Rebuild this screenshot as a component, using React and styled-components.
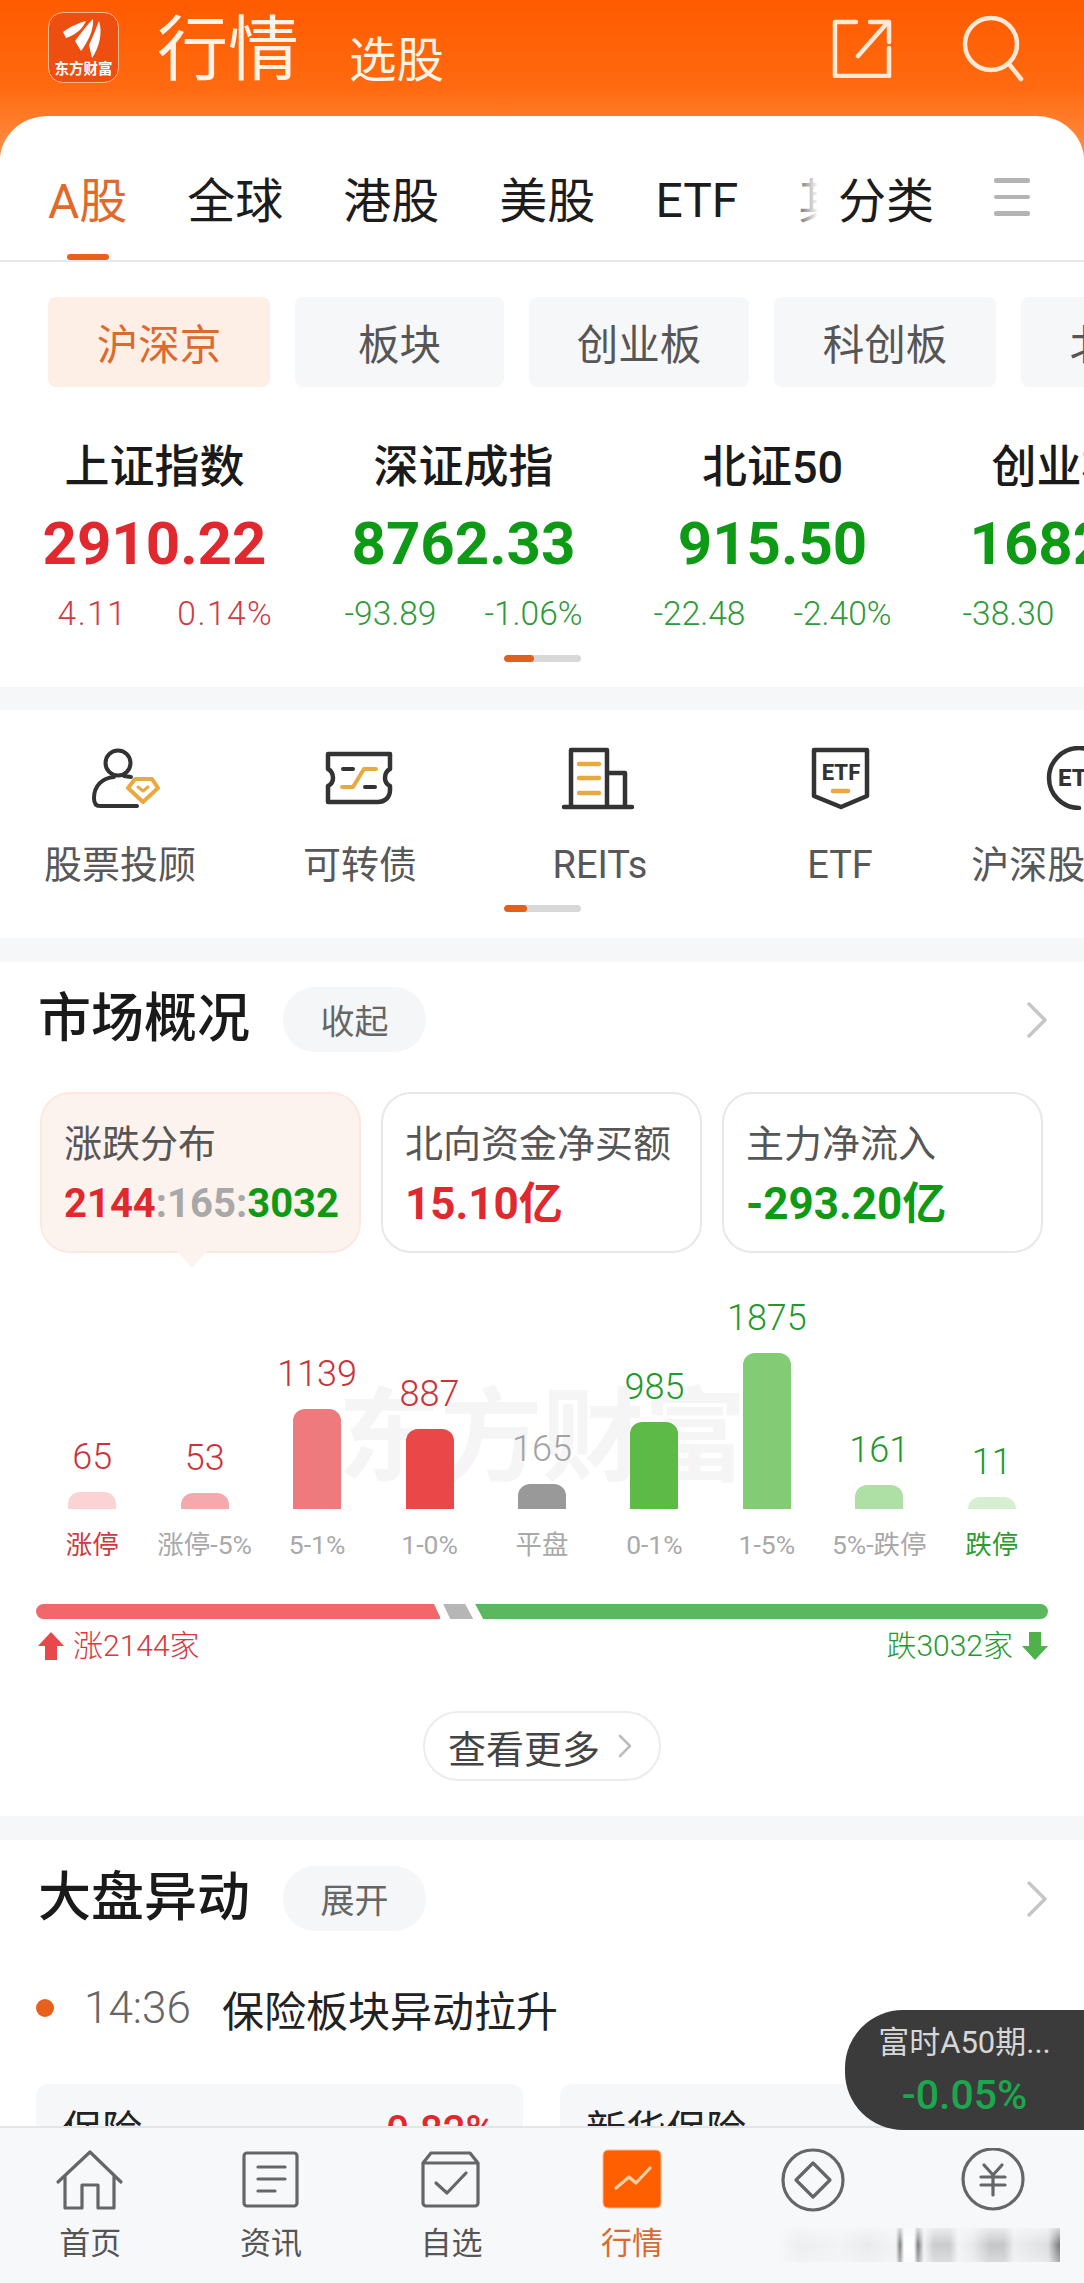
import React from "react";
import styled, { createGlobalStyle } from "styled-components";

const FONT = `Roboto, "Noto Sans CJK SC", sans-serif`;
const RED = "#e1282e";
const GREEN = "#0e9a14";

const Global = createGlobalStyle`
  html, body { margin: 0; padding: 0; background: #fff; }
  * { box-sizing: border-box; }
`;

const Page = styled.div`
  position: relative;
  width: 1084px;
  height: 2283px;
  overflow: hidden;
  font-family: ${FONT};
  background: linear-gradient(180deg, #ff5b00 0%, #ff6a10 50%, #ff9a55 100%) no-repeat;
  background-size: 100% 175px;
`;

const Header = styled.header`
  height: 116px;
  padding-left: 48px;
  display: flex;
  align-items: flex-start;
  color: #fff3e8;
`;
const Logo = styled.div`
  position: relative;
  width: 71px;
  height: 71px;
  margin-top: 12px;
  border-radius: 15px;
  border: 1.5px solid #ffb98c;
  background: #ee4f10;
  flex-shrink: 0;
  svg { display: block; }
`;
const LogoText = styled.span`
  position: absolute;
  left: 0;
  right: 0;
  bottom: 3px;
  text-align: center;
  font-size: 14.5px;
  line-height: 18px;
  font-weight: 700;
  color: #fff;
  white-space: nowrap;
`;
const Title = styled.h1`
  margin: 9px 0 0 38px;
  font-size: 71px;
  line-height: 82px;
  font-weight: 400;
`;
const SubTitle = styled.span`
  margin: 33px 0 0 50px;
  font-size: 47.5px;
  line-height: 56px;
`;
const HeaderIcons = styled.div`
  margin-left: auto;
  margin-right: 58px;
  margin-top: 14px;
  display: flex;
  gap: 68px;
`;

const Sheet = styled.main`
  background: #fff;
  border-radius: 48px 48px 0 0 / 44px 44px 0 0;
`;

const TabRow = styled.nav`
  height: 146px;
  display: flex;
  border-bottom: 2px solid #e8e8e8;
  padding-top: 24px;
`;
const TabScroll = styled.div`
  position: relative;
  width: 828px;
  padding-left: 48px;
  display: flex;
  gap: 60px;
  overflow: hidden;
  flex-shrink: 0;
  &::after {
    content: "";
    position: absolute;
    top: 0;
    bottom: 0;
    right: 0;
    width: 40px;
    background: linear-gradient(90deg, rgba(255,255,255,0) 0%, #fff 75%);
  }
`;
const Tab = styled.div`
  position: relative;
  display: flex;
  align-items: center;
  flex-shrink: 0;
  padding-bottom: ${(p) => (p.$latin ? 0 : 6)}px;
  font-size: 48px;
  color: ${(p) => (p.$active ? "#e0692c" : "#1c1c1c")};
  &::after {
    content: "";
    display: ${(p) => (p.$active ? "block" : "none")};
    position: absolute;
    bottom: 0;
    left: 19px;
    width: 42px;
    height: 6px;
    border-radius: 3px;
    background: #e8601c;
  }
`;
const TabFixed = styled(Tab)`
  margin-left: 10px;
`;
const MenuIcon = styled.div`
  margin-left: 60px;
  width: 36px;
  padding-bottom: 6px;
  display: flex;
  flex-direction: column;
  justify-content: center;
  gap: 12px;
  span {
    display: block;
    height: 4.5px;
    border-radius: 2px;
    background: #b4b4b4;
  }
`;

const ChipRow = styled.div`
  padding: 35px 0 0 48px;
  display: flex;
  gap: 25px;
  overflow: hidden;
`;
const Chip = styled.div`
  width: ${(p) => p.$w}px;
  height: 90px;
  flex-shrink: 0;
  border-radius: 8px;
  display: flex;
  align-items: center;
  justify-content: center;
  font-size: 41.5px;
  color: ${(p) => (p.$active ? "#dc6a2e" : "#565656")};
  background: ${(p) => (p.$active ? "#fdeee6" : "#f6f7f9")};
`;

const IndexRow = styled.section`
  display: flex;
  padding-top: 57px;
`;
const IndexCol = styled.div`
  width: 309px;
  flex-shrink: 0;
  display: flex;
  flex-direction: column;
  align-items: center;
`;
const IndexName = styled.div`
  font-size: 45px;
  line-height: 48px;
  font-weight: 500;
  color: #1a1a1a;
  white-space: nowrap;
`;
const IndexValue = styled.div`
  margin-top: 20px;
  font-size: 60px;
  line-height: 64px;
  font-weight: 700;
  color: ${(p) => p.$c};
  white-space: nowrap;
`;
const IndexSub = styled.div`
  margin-top: 18px;
  display: flex;
  gap: ${(p) => (p.$lead ? 50 : 48)}px;
  font-size: 33.5px;
  line-height: 40px;
  font-weight: 300;
  letter-spacing: ${(p) => (p.$lead ? 1.5 : 0)}px;
  color: ${(p) => p.$c};
  white-space: nowrap;
  padding-left: ${(p) => (p.$lead ? 22 : 0)}px;
`;
const Pager = styled.div`
  width: 77px;
  height: 7px;
  margin: ${(p) => p.$top}px auto 0;
  border-radius: 4px;
  overflow: hidden;
  background: #d8d8d8;
  span {
    display: block;
    width: ${(p) => p.$fill}%;
    height: 100%;
    border-radius: 4px;
    background: #e0601c;
  }
`;
const Gap = styled.div`
  height: ${(p) => p.$h}px;
  margin-top: ${(p) => p.$mt || 0}px;
  background: #f6f7f9;
`;

const ShortcutRow = styled.section`
  display: flex;
  padding-top: 36px;
  overflow: hidden;
`;
const Shortcut = styled.div`
  width: 240px;
  flex-shrink: 0;
  display: flex;
  flex-direction: column;
  align-items: center;
  svg { display: block; flex-shrink: 0; }
`;
const ShortcutLabel = styled.div`
  margin-top: 33px;
  font-size: 38px;
  line-height: 44px;
  color: #585858;
  white-space: nowrap;
`;

const SectionHead = styled.div`
  padding: ${(p) => p.$top}px 36px 0 38px;
  display: flex;
  align-items: center;
`;
const SectionTitle = styled.h2`
  margin: 0;
  font-size: 53px;
  line-height: 65px;
  font-weight: 500;
  color: #1a1a1a;
`;
const Pill = styled.div`
  margin-left: 33px;
  width: 143px;
  height: 65px;
  border-radius: 32px;
  background: #f5f6f8;
  font-size: 34px;
  color: #666;
  display: flex;
  align-items: center;
  justify-content: center;
`;
const Chevron = styled.svg`
  margin-left: auto;
  display: block;
`;

const Cards = styled.div`
  margin-top: 40px;
  padding: 0 40px;
  display: grid;
  grid-template-columns: repeat(3, 321px);
  gap: 20px;
`;
const Card = styled.div`
  position: relative;
  height: 161px;
  padding: 28px 0 0 22px;
  border-radius: 30px;
  border: 2px solid ${(p) => (p.$active ? "#fbe9e0" : "#e8e8e8")};
  background: ${(p) => (p.$active ? "#fdf3ee" : "#fff")};
  &::after {
    content: "";
    display: ${(p) => (p.$active ? "block" : "none")};
    position: absolute;
    left: 135px;
    bottom: -17px;
    width: 30px;
    height: 17px;
    background: #fdf3ee;
    clip-path: polygon(0 0, 100% 0, 50% 100%);
  }
`;
const CardLabel = styled.div`
  font-size: 38px;
  line-height: 44px;
  color: #565656;
  white-space: nowrap;
`;
const CardValue = styled.div`
  margin-top: 13px;
  font-size: ${(p) => p.$size || 44}px;
  line-height: 50px;
  font-weight: 700;
  color: ${(p) => p.$c || "#333"};
  white-space: nowrap;
`;
const Muted = styled.span`
  color: ${(p) => p.$c};
`;

const Chart = styled.div`
  position: relative;
  height: 307px;
  margin-bottom: 1px;
  padding: 0 36px;
  display: flex;
  align-items: flex-end;
`;
const Watermark = styled.div`
  position: absolute;
  left: 338px;
  top: 125px;
  font-size: 102px;
  line-height: 120px;
  font-weight: 700;
  color: #f5f5f5;
  white-space: nowrap;
`;
const BarCol = styled.div`
  position: relative;
  width: 112.5px;
  display: flex;
  flex-direction: column;
  align-items: center;
`;
const BarValue = styled.div`
  font-size: 36px;
  line-height: 40px;
  font-weight: 300;
  margin-bottom: 15px;
  color: ${(p) => p.$c};
`;
const Bar = styled.div`
  width: 48px;
  height: ${(p) => p.$h}px;
  border-radius: 12px 12px 0 0;
  background: ${(p) => p.$c};
`;
const BarLabel = styled.div`
  margin-top: 21px;
  font-size: 26.5px;
  line-height: 30px;
  white-space: nowrap;
  color: ${(p) => p.$c};
`;

const Ratio = styled.div`
  margin: 44px 36px 0;
  height: 15px;
  display: flex;
`;
const RatioPart = styled.div`
  height: 100%;
  width: ${(p) => p.$w}px;
  margin-left: ${(p) => p.$ml || 0}px;
  background: ${(p) => p.$c};
  border-radius: ${(p) => p.$r || 0};
  clip-path: ${(p) => p.$clip};
`;
const Legend = styled.div`
  margin: 12px 36px 0 38px;
  display: flex;
  justify-content: space-between;
  align-items: center;
  height: 30px;
`;
const LegendItem = styled.div`
  display: flex;
  align-items: center;
  gap: 9px;
  font-size: 30px;
  line-height: 30px;
  font-weight: 300;
  color: ${(p) => p.$c};
`;
const MoreWrap = styled.div`
  margin-top: 50px;
  display: flex;
  justify-content: center;
  padding-bottom: 35px;
`;
const MoreButton = styled.div`
  width: 238px;
  height: 70px;
  padding-right: 4px;
  border-radius: 35px;
  border: 2px solid #ececec;
  display: flex;
  align-items: center;
  justify-content: center;
  gap: 18px;
  font-size: 38px;
  color: #444;
`;

const NewsRow = styled.div`
  margin-top: 52px;
  padding-left: 36px;
  height: 50px;
  display: flex;
  align-items: center;
`;
const Dot = styled.span`
  width: 18px;
  height: 18px;
  border-radius: 50%;
  background: #e8601c;
`;
const NewsTime = styled.span`
  margin-left: 30px;
  font-size: 44px;
  font-weight: 300;
  color: #666;
`;
const NewsText = styled.span`
  margin-left: 31px;
  font-size: 42px;
  color: #222;
`;
const StockCards = styled.div`
  margin-top: 51px;
  padding-left: 36px;
  display: flex;
  gap: 37px;
`;
const StockCard = styled.div`
  width: 487px;
  height: 150px;
  padding: 22px 28px 22px 26px;
  border-radius: 12px;
  background: #f6f7f9;
  display: flex;
  justify-content: space-between;
  font-size: 40px;
  line-height: 50px;
  color: #222;
`;
const StockPct = styled.span`
  font-weight: 500;
  color: ${RED};
`;

const Float = styled.aside`
  position: absolute;
  right: 0;
  top: 2010px;
  width: 239px;
  height: 120px;
  border-radius: 58px 0 0 58px;
  background: #3b3b3b;
  display: flex;
  flex-direction: column;
  align-items: center;
  padding-top: 13px;
  z-index: 3;
`;
const FloatName = styled.div`
  font-size: 31px;
  line-height: 40px;
  color: #d6d6d6;
  white-space: nowrap;
`;
const FloatPct = styled.div`
  margin-top: 9px;
  font-size: 41px;
  line-height: 46px;
  font-weight: 500;
  color: #1ea64e;
`;

const TabBar = styled.footer`
  position: absolute;
  left: 0;
  right: 0;
  top: 2126px;
  height: 157px;
  background: #f7f8fa;
  border-top: 2px solid #e4e5e7;
  display: grid;
  grid-template-columns: repeat(6, 180.6px);
  padding-top: 20px;
  z-index: 2;
`;
const NavItem = styled.div`
  display: flex;
  flex-direction: column;
  align-items: center;
  svg { display: block; }
`;
const NavLabel = styled.div`
  margin-top: 8px;
  font-size: 31px;
  line-height: 44px;
  min-height: 44px;
  color: ${(p) => (p.$active ? "#d96a30" : "#555")};
`;
const Smudge = styled.div`
  position: absolute;
  left: 778px;
  top: 100px;
  width: 282px;
  height: 34px;
  background:
    linear-gradient(90deg,
      rgba(0,0,0,0) 0, rgba(0,0,0,.04) 20px, rgba(0,0,0,.02) 60px, rgba(0,0,0,.05) 90px, rgba(0,0,0,.02) 115px,
      rgba(0,0,0,.03) 118px, rgba(0,0,0,.5) 122px, rgba(255,255,255,.9) 126px, rgba(255,255,255,.9) 136px, rgba(0,0,0,.5) 140px,
      rgba(0,0,0,.02) 146px, rgba(0,0,0,.18) 156px, rgba(0,0,0,.18) 172px, rgba(0,0,0,.02) 180px, rgba(0,0,0,.06) 195px,
      rgba(0,0,0,.2) 212px, rgba(0,0,0,.2) 226px, rgba(0,0,0,.04) 236px, rgba(0,0,0,.1) 270px, rgba(0,0,0,.5) 281px);
  -webkit-mask-image: linear-gradient(180deg, rgba(0,0,0,.25), #000 50%, rgba(0,0,0,.6));
  mask-image: linear-gradient(180deg, rgba(0,0,0,.25), #000 50%, rgba(0,0,0,.6));
`;

const DK = "#333";
const GD = "#e8aa3e";

const ChevronIcon = ({ w = 22, h = 36 }) => (
  <Chevron width={w} height={h} viewBox="0 0 22 36" fill="none" stroke="#c6c6c6" strokeWidth="3.5" strokeLinecap="round" strokeLinejoin="round">
    <path d="M3 2L19 18L3 34" />
  </Chevron>
);

const bars = [
  { v: "65", l: "涨停", h: 17, b: "#fbd3d4", c: "#c9343a", lc: "#cf3a40" },
  { v: "53", l: "涨停-5%", h: 16, b: "#f4a9ad", c: "#c9343a", lc: "#a9a9a9" },
  { v: "1139", l: "5-1%", h: 100, b: "#ef7a7d", c: "#c9343a", lc: "#a9a9a9" },
  { v: "887", l: "1-0%", h: 80, b: "#ea4749", c: "#c9343a", lc: "#a9a9a9" },
  { v: "165", l: "平盘", h: 25, b: "#999", c: "#a3a3a3", lc: "#a9a9a9" },
  { v: "985", l: "0-1%", h: 87, b: "#5dba47", c: "#1f9a2c", lc: "#a9a9a9" },
  { v: "1875", l: "1-5%", h: 156, b: "#83cb75", c: "#1f9a2c", lc: "#a9a9a9" },
  { v: "161", l: "5%-跌停", h: 24, b: "#aedfa4", c: "#1f9a2c", lc: "#a9a9a9" },
  { v: "11", l: "跌停", h: 12, b: "#d6efd1", c: "#1f9a2c", lc: "#2f9a2f" },
];

const indices = [
  { n: "上证指数", v: "2910.22", a: "4.11", p: "0.14%", c: RED, s: "#d23a42", lead: true },
  { n: "深证成指", v: "8762.33", a: "-93.89", p: "-1.06%", c: GREEN, s: "#2e9a38" },
  { n: "北证50", v: "915.50", a: "-22.48", p: "-2.40%", c: GREEN, s: "#2e9a38" },
  { n: "创业板指", v: "1682.45", a: "-38.30", p: "-2.22%", c: GREEN, s: "#2e9a38" },
];

const PersonIcon = () => (
  <svg width="80" height="64" viewBox="0 0 80 64" fill="none" strokeLinecap="round" strokeLinejoin="round">
    <g stroke={DK} strokeWidth="4">
      <circle cx="38" cy="17" r="12.5" />
      <path d="M34 31C22 32 14 40 14 52C14 57 16 60 20 60H57M44 30L51 31" />
    </g>
    <path d="M55 33H72L78 42L63 56L48 42Z" fill="#fff" stroke={GD} strokeWidth="4" />
    <path d="M58 41L63 45L68 41" stroke={GD} strokeWidth="3" />
  </svg>
);
const TicketIcon = () => (
  <svg width="80" height="64" viewBox="0 0 80 64" fill="none" strokeLinecap="round" strokeLinejoin="round">
    <path d="M8 8H70V23C66 25 65 28 65 32C65 36 66 38 70 40V44C70 52 64 56 58 56H8V40C12 38 13 36 13 32C13 28 12 25 8 23Z" stroke={DK} strokeWidth="4.5" />
    <path d="M23 23H33M45 41H55" stroke={DK} strokeWidth="4" />
    <path d="M22 41H33L44 23H56" stroke={GD} strokeWidth="4" />
  </svg>
);
const BuildingIcon = () => (
  <svg width="80" height="64" viewBox="0 0 80 64" fill="none" strokeLinecap="round" strokeLinejoin="round">
    <path d="M11 61V4H47V61M47 27H65V61M4 61H72" stroke={DK} strokeWidth="4.5" />
    <path d="M19 18H39M19 32H39M19 47H39" stroke={GD} strokeWidth="4.5" />
  </svg>
);
const ShieldIcon = () => (
  <svg width="80" height="64" viewBox="0 0 80 64" fill="none" strokeLinecap="round" strokeLinejoin="round">
    <path d="M14 4H67V50L41 61L14 50Z" stroke={DK} strokeWidth="4.5" />
    <text x="41" y="34" textAnchor="middle" fontSize="22" fontWeight="800" fill={DK} stroke="none" fontFamily="Roboto, sans-serif">ETF</text>
    <path d="M33 45H48" stroke={GD} strokeWidth="4.5" />
  </svg>
);
const EtfCircleIcon = () => (
  <svg width="80" height="64" viewBox="0 0 80 64" fill="none" strokeLinecap="round">
    <path d="M39 62A30 30 0 1 1 69 32" stroke={DK} strokeWidth="4.5" />
    <text x="39" y="40" textAnchor="middle" fontSize="24" fontWeight="800" fill={DK} stroke="none" fontFamily="Roboto, sans-serif">ETF</text>
  </svg>
);

const NavSvg = ({ children, stroke = "#666" }) => (
  <svg width="72" height="66" viewBox="0 0 72 66" fill="none" stroke={stroke} strokeWidth="3.2" strokeLinecap="round" strokeLinejoin="round">
    {children}
  </svg>
);

export default function App() {
  return (
    <Page>
      <Global />
      <Header>
        <Logo>
          <svg width="68" height="68" viewBox="0 0 68 68" fill="#fff">
            <path d="M14 19C20 14 30 10 37 8C34 15 28 21 17 25Z" />
            <path d="M26 28C32 20 38 12 44 6C45 16 39 29 32 38Z" />
            <path d="M40 32C44 24 47 15 50 8C54 20 50 35 43 45Z" />
          </svg>
          <LogoText>东方财富</LogoText>
        </Logo>
        <Title>行情</Title>
        <SubTitle>选股</SubTitle>
        <HeaderIcons>
          <svg width="60" height="64" viewBox="0 0 60 64" fill="none" stroke="#ffe8d6" strokeWidth="4.5" strokeLinecap="round" strokeLinejoin="round">
            <path d="M24 8H3V62H57V34M26 42L56 8M38 8H57V28" />
          </svg>
          <svg width="66" height="70" viewBox="0 0 66 70" fill="none" stroke="#ffe8d6" strokeWidth="4.5" strokeLinecap="round">
            <circle cx="31" cy="30" r="26" />
            <path d="M49 50L61 65" />
          </svg>
        </HeaderIcons>
      </Header>

      <Sheet>
        <TabRow>
          <TabScroll>
            <Tab $active>A股</Tab>
            <Tab>全球</Tab>
            <Tab>港股</Tab>
            <Tab>美股</Tab>
            <Tab $latin>ETF</Tab>
            <Tab>其他</Tab>
          </TabScroll>
          <TabFixed>分类</TabFixed>
          <MenuIcon><span /><span /><span /></MenuIcon>
        </TabRow>

        <ChipRow>
          <Chip $w={222} $active>沪深京</Chip>
          <Chip $w={209}>板块</Chip>
          <Chip $w={220}>创业板</Chip>
          <Chip $w={222}>科创板</Chip>
          <Chip $w={222}>北交所</Chip>
        </ChipRow>

        <IndexRow>
          {indices.map((x) => (
            <IndexCol key={x.n}>
              <IndexName>{x.n}</IndexName>
              <IndexValue $c={x.c}>{x.v}</IndexValue>
              <IndexSub $c={x.s} $lead={x.lead}>
                <span>{x.a}</span>
                <span>{x.p}</span>
              </IndexSub>
            </IndexCol>
          ))}
        </IndexRow>
        <Pager $top={21} $fill={40}><span /></Pager>
        <Gap $h={23} $mt={25} />

        <ShortcutRow>
          <Shortcut><PersonIcon /><ShortcutLabel>股票投顾</ShortcutLabel></Shortcut>
          <Shortcut><TicketIcon /><ShortcutLabel>可转债</ShortcutLabel></Shortcut>
          <Shortcut><BuildingIcon /><ShortcutLabel>REITs</ShortcutLabel></Shortcut>
          <Shortcut><ShieldIcon /><ShortcutLabel>ETF</ShortcutLabel></Shortcut>
          <Shortcut><EtfCircleIcon /><ShortcutLabel>沪深股通ETF</ShortcutLabel></Shortcut>
        </ShortcutRow>
        <Pager $top={18} $fill={30}><span /></Pager>
        <Gap $h={24} $mt={26} />

        <SectionHead $top={25}>
          <SectionTitle>市场概况</SectionTitle>
          <Pill>收起</Pill>
          <ChevronIcon />
        </SectionHead>

        <Cards>
          <Card $active>
            <CardLabel>涨跌分布</CardLabel>
            <CardValue $size={40}>
              <Muted $c={RED}>2144</Muted>
              <Muted $c="#a8a8a8">:165:</Muted>
              <Muted $c={GREEN}>3032</Muted>
            </CardValue>
          </Card>
          <Card>
            <CardLabel>北向资金净买额</CardLabel>
            <CardValue $c={RED}>15.10亿</CardValue>
          </Card>
          <Card>
            <CardLabel>主力净流入</CardLabel>
            <CardValue $c={GREEN}>-293.20亿</CardValue>
          </Card>
        </Cards>

        <Chart>
          <Watermark>东方财富</Watermark>
          {bars.map((b) => (
            <BarCol key={b.l}>
              <BarValue $c={b.c}>{b.v}</BarValue>
              <Bar $h={b.h} $c={b.b} />
              <BarLabel $c={b.lc}>{b.l}</BarLabel>
            </BarCol>
          ))}
        </Chart>

        <Ratio>
          <RatioPart $w={405} $c="#f2676a" $r="8px 0 0 8px" $clip="polygon(0 0, 398px 0, 405px 100%, 0 100%)" />
          <RatioPart $w={30} $ml={3} $c="#b6b6b6" $clip="polygon(0 0, 22px 0, 30px 100%, 7px 100%)" />
          <RatioPart $w={574} $ml={2} $c="#5cb85f" $r="0 8px 8px 0" $clip="polygon(0 0, 100% 0, 100% 100%, 8px 100%)" />
        </Ratio>

        <Legend>
          <LegendItem $c="#d9363e">
            <svg width="26" height="28" viewBox="0 0 26 28" fill="#e8474b"><path d="M13 0L26 14H19V28H7V14H0Z" /></svg>
            <span>涨2144家</span>
          </LegendItem>
          <LegendItem $c="#1f9a2c">
            <span>跌3032家</span>
            <svg width="26" height="28" viewBox="0 0 26 28" fill="#4fb14a"><path d="M13 28L26 14H19V0H7V14H0Z" /></svg>
          </LegendItem>
        </Legend>

        <MoreWrap>
          <MoreButton>
            查看更多
            <svg width="14" height="24" viewBox="0 0 14 24" fill="none" stroke="#bdbdbd" strokeWidth="2.6" strokeLinecap="round" strokeLinejoin="round">
              <path d="M2 2L12 12L2 22" />
            </svg>
          </MoreButton>
        </MoreWrap>
        <Gap $h={24} />

        <SectionHead $top={26}>
          <SectionTitle>大盘异动</SectionTitle>
          <Pill>展开</Pill>
          <ChevronIcon />
        </SectionHead>

        <NewsRow>
          <Dot />
          <NewsTime>14:36</NewsTime>
          <NewsText>保险板块异动拉升</NewsText>
        </NewsRow>

        <StockCards>
          <StockCard>
            <span>保险</span>
            <StockPct>0.82%</StockPct>
          </StockCard>
          <StockCard>
            <span>新华保险</span>
          </StockCard>
        </StockCards>
      </Sheet>

      <Float>
        <FloatName>富时A50期...</FloatName>
        <FloatPct>-0.05%</FloatPct>
      </Float>

      <TabBar>
        <NavItem>
          <NavSvg><path d="M4 34L36 4L67 34M11 28V60H28V37H44V60H60V28" /></NavSvg>
          <NavLabel>首页</NavLabel>
        </NavItem>
        <NavItem>
          <NavSvg>
            <rect x="9" y="5" width="53" height="53" rx="3" />
            <path d="M23 19H50M23 31H50M23 43H40" />
          </NavSvg>
          <NavLabel>资讯</NavLabel>
        </NavItem>
        <NavItem>
          <NavSvg>
            <path d="M8 15L16 5H55L63 15V55A3 3 0 0 1 60 58H11A3 3 0 0 1 8 55ZM8 15H63" />
            <path d="M21 35L32 45L51 25" />
          </NavSvg>
          <NavLabel>自选</NavLabel>
        </NavItem>
        <NavItem>
          <NavSvg stroke="#ffd0a8">
            <rect x="7" y="2" width="58" height="58" rx="5" fill="#ff5f00" stroke="#ffb98c" strokeWidth="1" />
            <path d="M20 40L33 29L40 35L54 20" />
          </NavSvg>
          <NavLabel $active>行情</NavLabel>
        </NavItem>
        <NavItem>
          <NavSvg>
            <circle cx="36" cy="32" r="30" />
            <path d="M36 15L53 32L36 49L19 32Z" />
          </NavSvg>
          <NavLabel />
        </NavItem>
        <NavItem>
          <NavSvg>
            <circle cx="36" cy="31" r="30" />
            <path d="M27 17L36 27L45 17M24 29H48M24 37H48M36 27V47" />
          </NavSvg>
          <NavLabel />
        </NavItem>
        <Smudge />
      </TabBar>
    </Page>
  );
}
